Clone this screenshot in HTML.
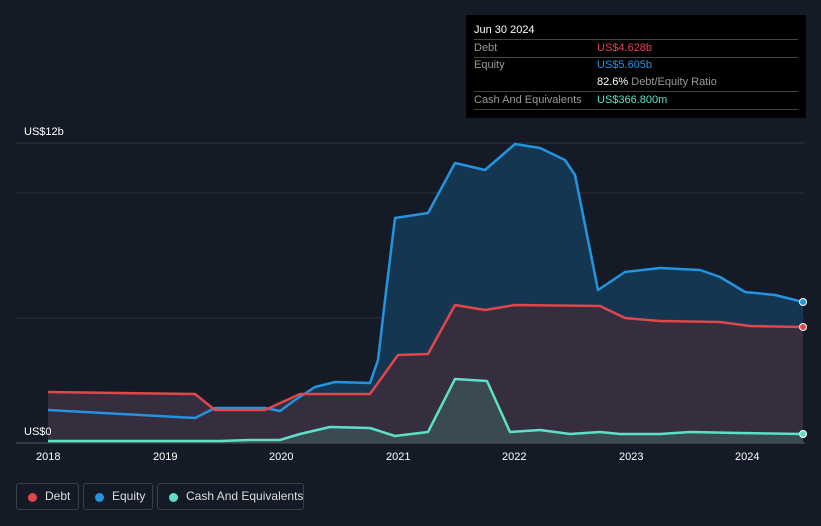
<!DOCTYPE html>
<html><head><meta charset="utf-8"><style>
html,body{margin:0;width:821px;height:526px;overflow:hidden}
body{background:#151b26;font-family:"Liberation Sans",sans-serif;position:relative}
.tt{position:absolute;left:466px;top:15px;width:340px;height:103px;background:#000;color:#fff;font-size:11px}
.tt .r{position:absolute;left:8px;right:8px;border-bottom:1px solid #444;height:17px;line-height:17px;white-space:nowrap}
.lab{color:#999}
.leg{position:absolute;top:483px;height:27px;border:1px solid #3a3f4a;border-radius:3px;color:#ddd;font-size:12px;line-height:25px;box-sizing:border-box;white-space:nowrap}
.leg i{position:absolute;left:11px;top:9px;width:9px;height:9px;border-radius:50%}
.leg span{position:absolute;left:28px}
.ax{position:absolute;color:#fff;font-size:11px}
</style></head><body>
<svg width="821" height="526" style="position:absolute;left:0;top:0">
<line x1="16" y1="143" x2="805" y2="143" stroke="#2c323d"/>
<line x1="16" y1="193" x2="805" y2="193" stroke="#2a303b"/>
<line x1="16" y1="318" x2="805" y2="318" stroke="#2a303b"/>
<path d="M48,410 L195,418 L215,408 L265,408 L280,411 L295,400 L315,387 L335,382 L370,383 L378,360 L385,300 L395,218 L428,213 L455,163 L485,170 L515,144 L540,148 L565,160 L575,175 L598,290 L625,272 L660,268 L700,270 L720,277 L745,292 L775,295 L803,302 L803,443 L48,443Z" fill="#143650"/>
<path d="M48,392 L195,394 L215,410 L265,410 L300,394 L370,394 L398,355 L428,354 L455,305 L485,310 L515,305 L600,306 L625,318 L660,321 L720,322 L750,326 L803,327 L803,443 L48,443Z" fill="#362e3e"/>
<path d="M48,441 L220,441 L250,440 L280,440 L300,434 L330,427 L370,428 L395,436 L428,432 L455,379 L487,381 L510,432 L540,430 L570,434 L600,432 L620,434 L660,434 L690,432 L740,433 L803,434 L803,443 L48,443Z" fill="#3a4a50"/>
<line x1="16" y1="443" x2="805" y2="443" stroke="#555"/>
<polyline fill="none" stroke="#2394df" stroke-width="2.5" stroke-linejoin="round" points="48,410 195,418 215,408 265,408 280,411 295,400 315,387 335,382 370,383 378,360 385,300 395,218 428,213 455,163 485,170 515,144 540,148 565,160 575,175 598,290 625,272 660,268 700,270 720,277 745,292 775,295 803,302"/>
<polyline fill="none" stroke="#e0474c" stroke-width="2.5" stroke-linejoin="round" points="48,392 195,394 215,410 265,410 300,394 370,394 398,355 428,354 455,305 485,310 515,305 600,306 625,318 660,321 720,322 750,326 803,327"/>
<polyline fill="none" stroke="#5ee0c8" stroke-width="2.5" stroke-linejoin="round" points="48,441 220,441 250,440 280,440 300,434 330,427 370,428 395,436 428,432 455,379 487,381 510,432 540,430 570,434 600,432 620,434 660,434 690,432 740,433 803,434"/>
<circle cx="803" cy="302" r="3.5" fill="#2394df" stroke="#fff"/>
<circle cx="803" cy="327" r="3.5" fill="#e0474c" stroke="#fff"/>
<circle cx="803" cy="434" r="3.5" fill="#5ee0c8" stroke="#fff"/>
</svg>
<div class="ax" style="left:24px;top:126px">US$12b</div>
<div class="ax" style="left:24px;top:426px">US$0</div>
<div class="ax" style="left:36px;top:451px">2018</div>
<div class="ax" style="left:153px;top:451px">2019</div>
<div class="ax" style="left:269px;top:451px">2020</div>
<div class="ax" style="left:386px;top:451px">2021</div>
<div class="ax" style="left:502px;top:451px">2022</div>
<div class="ax" style="left:619px;top:451px">2023</div>
<div class="ax" style="left:735px;top:451px">2024</div>
<div class="tt">
<div class="r" style="top:7px">Jun 30 2024</div>
<div class="r" style="top:25px"><span class="lab">Debt</span><span style="position:absolute;left:123px;color:#e0474c">US$4.628b</span></div>
<div class="r" style="top:42px;border:none"><span class="lab">Equity</span><span style="position:absolute;left:123px;color:#2394df">US$5.605b</span></div>
<div class="r" style="top:59px"><span style="position:absolute;left:123px">82.6% <span class="lab">Debt/Equity Ratio</span></span></div>
<div class="r" style="top:77px"><span class="lab">Cash And Equivalents</span><span style="position:absolute;left:123px;color:#5ee0c8">US$366.800m</span></div>
</div>
<div class="leg" style="left:16px;width:63px"><i style="background:#e0474c"></i><span>Debt</span></div>
<div class="leg" style="left:83px;width:70px"><i style="background:#2394df"></i><span>Equity</span></div>
<div class="leg" style="left:157px;width:147px"><i style="background:#5ee0c8"></i><span>Cash And Equivalents</span></div>
</body></html>
